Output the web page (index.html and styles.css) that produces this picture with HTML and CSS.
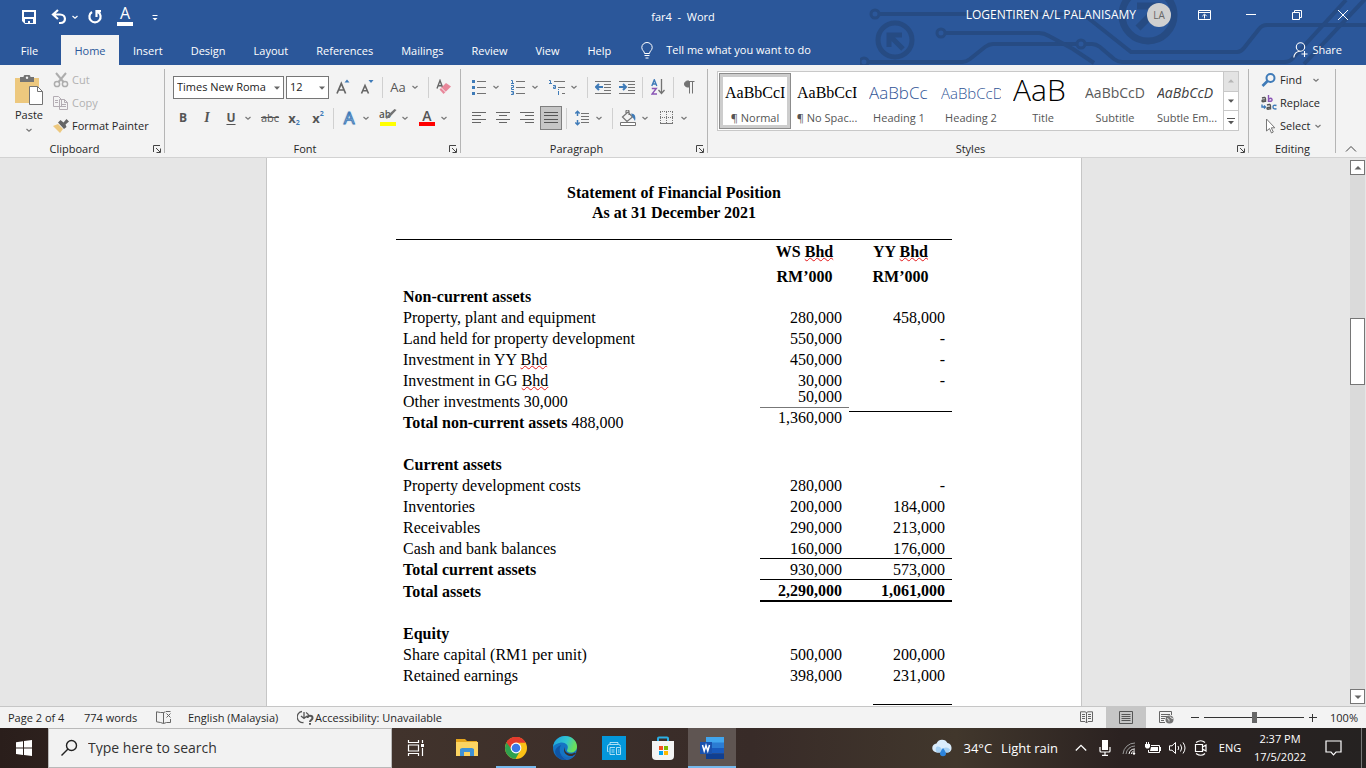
FILE: index.html
```html
<!DOCTYPE html>
<html lang="en">
<head>
<meta charset="utf-8">
<title>far4 - Word</title>
<link rel="stylesheet" href="styles.css">
</head>
<body>
<svg class="defs" aria-hidden="true">
  <symbol id="caret" viewBox="0 0 10 10"><path d="M2.500 4 5 6.300 7.500 4" fill="none" stroke="currentColor" stroke-width="1.200"/></symbol>
  <symbol id="launch" viewBox="0 0 8 8"><path d="M.5 7V.5H7M3 3l4 4M7.500 3.500v4h-4" fill="none" stroke="#444"/></symbol>
  <symbol id="tri" viewBox="0 0 8 8"><path d="M1 2.500h6L4 5.800z" fill="currentColor"/></symbol>
</svg>

<header class="top">
  <svg class="circuit" viewBox="860 0 506 65" fill="none" stroke="#264b83" stroke-width="4" aria-hidden="true">
    <circle cx="875" cy="14" r="4" stroke-width="3"/><path d="M879 14h180l24 0 24 19 24 19h106q4 0 7-4l15-19q3-4 8-4h99"/>
    <circle cx="895" cy="40" r="17" stroke-width="5"/><path d="M889 47V35h13M890 36l13 13" stroke-width="5"/>
    <circle cx="864" cy="62" r="4" stroke-width="3"/><path d="M868 62h94q4 0 8-3l15-12q4-3 8-3h84"/>
    <circle cx="941" cy="33" r="4" stroke-width="3"/><path d="M945 33h94q5 0 10 3l24 13 21 14"/>
    <circle cx="1081" cy="44" r="4" stroke-width="3"/><path d="M1085 44h7q4 0 8 3l14 12q4 3 8 3h162q6 0 9-4l53-58M1304 64l62-66"/>
    <circle cx="1148" cy="15" r="26" stroke-width="7"/><path d="M1138 28l18-18M1137 6h20v20" stroke-width="7"/>
  </svg>
  <div class="titlebar">
    <div class="quick">
      <button aria-label="Save"><svg width="16" height="16" viewBox="0 0 16 16"><path d="M1 1h14v14H4l-3-3z" fill="#fff"/><path d="M3 3h10v5H3zM4 10h8v4H9v-2H7v2H4z" fill="#2b579a"/></svg></button>
      <button aria-label="Undo"><svg width="16" height="16" viewBox="0 0 16 16" fill="none" stroke="#fff" stroke-width="2.200"><path d="M7 1 2 5.500 7 10M2 5.500h7c6.500 0 6.500 8.500.5 8.500H8"/></svg></button>
      <button class="slim" aria-label="Undo history"><svg width="10" height="10"><use href="#caret"/></svg></button>
      <button aria-label="Redo"><svg width="16" height="16" viewBox="0 0 16 16" fill="none" stroke="#fff" stroke-width="2.200"><path d="M5 3a5.600 5.600 0 1 0 6 0M14 2.200H9.500V8"/></svg></button>
      <button class="fontqat" aria-label="Font colour"><span>A</span></button>
      <button aria-label="Customise toolbar"><svg width="8" height="10" viewBox="0 0 8 10"><path d="M1.500 3.500h5" stroke="#fff"/><path d="M1.500 6h5L4 8.500z" fill="#fff"/></svg></button>
    </div>
    <div class="title">far4&nbsp; -&nbsp; Word</div>
    <div class="account">
      <span class="user">LOGENTIREN A/L PALANISAMY</span>
      <span class="avatar">LA</span>
      <div class="win">
        <button aria-label="Ribbon display options"><svg width="14" height="12" viewBox="0 0 14 12" fill="none" stroke="#fff"><path d="M.5 1.500h12v9H.5zM.5 3.500h12M6.500 9.500v-4M4.300 7.200 6.500 5l2.200 2.200"/></svg></button>
        <button aria-label="Minimise"><svg width="10" height="10"><path d="M0 4.500h10" stroke="#fff"/></svg></button>
        <button aria-label="Restore"><svg width="10" height="10" viewBox="0 0 10 10" fill="none" stroke="#fff"><path d="M.5 2.500h7v7h-7zM2.500 2.500V.5h7v7h-2"/></svg></button>
        <button aria-label="Close"><svg width="10" height="10" viewBox="0 0 10 10" fill="none" stroke="#fff"><path d="M0 0l10 10M10 0 0 10"/></svg></button>
      </div>
    </div>
  </div>
  <nav class="tabs">
    <button class="file">File</button>
    <button class="active">Home</button>
    <button>Insert</button>
    <button>Design</button>
    <button>Layout</button>
    <button>References</button>
    <button>Mailings</button>
    <button>Review</button>
    <button>View</button>
    <button>Help</button>
    <button class="tell"><svg width="12" height="17" viewBox="0 0 12 17" fill="none" stroke="#fff"><path d="M3.500 11.500C3.500 9 .8 8.500.8 5.500a5.200 5 0 0 1 10.400 0c0 3-2.700 3.500-2.700 6zM3.500 13.500h5M4.500 16h3"/></svg>Tell me what you want to do</button>
    <button class="share"><svg width="15" height="16" viewBox="0 0 15 16" fill="none" stroke="#fff" stroke-width="1.100"><circle cx="7.500" cy="5" r="4.200"/><path d="M.8 15.500c.4-4 3-6 6-6.300M11.500 9v6M8.500 12h6"/></svg>Share</button>
  </nav>
</header>

<section class="ribbon">
  <div class="group clip">
    <div class="body">
      <button class="paste">
        <svg width="28" height="30" viewBox="0 0 28 30"><path d="M0 3h24v25H0z" fill="#edc87e"/><path d="M5 2h3.500a3.500 2.500 0 0 1 7 0H19v5H5z" fill="#737373"/><circle cx="12" cy="2.800" r="1.200" fill="#f3f3f3"/><path d="M14.500 11.500h8l5 5v13h-13z" fill="#fff" stroke="#737373"/><path d="M22.500 11.500v5h5" fill="none" stroke="#737373"/></svg>
        <span>Paste</span><svg width="10" height="10"><use href="#caret"/></svg>
      </button>
      <div class="list">
        <button disabled><svg width="16" height="16" viewBox="0 0 16 16" fill="none" stroke="#adadad" stroke-width="1.500"><circle cx="4" cy="12" r="2.600"/><circle cx="12" cy="12" r="2.600"/><path d="M3 1l7.500 9M13 1 5.500 10" stroke-width="2"/></svg>Cut</button>
        <button disabled><svg width="16" height="16" viewBox="0 0 16 16" fill="#f3f3f3" stroke="#b3acb3"><path d="M.5 1.500h5l3 3v7h-8zM6.500 4.500h5l3 3v7h-8zM11.500 4.500v3h3M8 9.500h5M8 11.500h5M2 5.500h3M2 7.500h3"/></svg>Copy</button>
        <button><svg width="16" height="16" viewBox="0 0 16 16"><path d="M0 8l5-2 5 5-3 4z" fill="#edc87e"/><path d="M5 4.500 7.500 2l3 2.500L13.500 1 16 3.500 12.500 6.500 13.500 9 11 11z" fill="#666"/></svg>Format Painter</button>
      </div>
    </div>
    <div class="foot"><span>Clipboard</span><svg width="8" height="8"><use href="#launch"/></svg></div>
  </div>

  <div class="group font">
    <div class="rows">
      <div class="row">
        <label class="combo name"><select aria-label="Font"><option>Times New Roma</option></select><svg width="8" height="8"><use href="#tri"/></svg></label>
        <label class="combo size"><select aria-label="Font size"><option>12</option></select><svg width="8" height="8"><use href="#tri"/></svg></label>
        <button class="tool" aria-label="Grow font"><svg width="14" height="16" viewBox="0 0 14 16"><path d="M1 14.500 5.300 4.500 9.600 14.500M2.800 11h5" fill="none" stroke="#666" stroke-width="1.700"/><path d="M8.500 3.500h5l-2.500-3z" fill="#3f7bb8"/></svg></button>
        <button class="tool" aria-label="Shrink font"><svg width="14" height="16" viewBox="0 0 14 16"><path d="M1.500 14.500 5 6.500 8.500 14.500M3 11.700h4" fill="none" stroke="#666" stroke-width="1.600"/><path d="M8.500 1h5L11 4z" fill="#3f7bb8"/></svg></button>
        <i class="sep"></i>
        <button class="tool case">Aa</button><button class="drop" aria-label="Case options"><svg width="10" height="10"><use href="#caret"/></svg></button>
        <i class="sep"></i>
        <button class="tool" aria-label="Clear formatting"><svg width="16" height="16" viewBox="0 0 16 16"><path d="M1 9.500 4 1.500l3 8M2 6.800h4" fill="none" stroke="#666" stroke-width="1.400"/><path d="M3.500 10.500 10 4l5 3.500L7.500 15z" fill="#e8879a"/><path d="M5.500 9l4 4" stroke="#f3f3f3"/></svg></button>
      </div>
      <div class="row">
        <button class="tool bold">B</button>
        <button class="tool ital">I</button>
        <button class="tool under">U</button><button class="drop" aria-label="Underline options"><svg width="10" height="10"><use href="#caret"/></svg></button>
        <button class="tool strike">abc</button>
        <button class="tool script">x<sub>2</sub></button>
        <button class="tool script">x<sup>2</sup></button>
        <i class="sep"></i>
        <button class="tool effect">A</button><button class="drop" aria-label="Effect options"><svg width="10" height="10"><use href="#caret"/></svg></button>
        <button class="tool high"><span>ab</span><svg width="12" height="11" viewBox="0 0 12 11"><path d="M11.500 1 4.500 8.500 1 10l1.500-3.500L9.500 0z" fill="#737373"/></svg></button><button class="drop" aria-label="Highlight options"><svg width="10" height="10"><use href="#caret"/></svg></button>
        <button class="tool color"><span>A</span></button><button class="drop" aria-label="Colour options"><svg width="10" height="10"><use href="#caret"/></svg></button>
      </div>
    </div>
    <div class="foot"><span>Font</span><svg width="8" height="8"><use href="#launch"/></svg></div>
  </div>

  <div class="group para">
    <div class="rows">
      <div class="row">
        <button class="tool" aria-label="Bullets"><svg width="14" height="16" viewBox="0 0 14 16"><path d="M5 2.500h9M5 8.500h9M5 14.500h9" stroke="#737373"/><path d="M0 1h3v3H0zM0 7h3v3H0zM0 13h3v3H0z" fill="#3f7bb8"/></svg></button><button class="drop" aria-label="Bullet options"><svg width="10" height="10"><use href="#caret"/></svg></button>
        <button class="tool" aria-label="Numbering"><svg width="14" height="16" viewBox="0 0 14 16"><path d="M5 2.500h9M5 8.500h9M5 14.500h9" stroke="#737373"/><path d="M0 1.500h1.500V4M0 4.500h3M0 6.500h2.500v2H.5v2H3M0 12.500h2.500v3H0M.8 14h1.700" fill="none" stroke="#3f7bb8"/></svg></button><button class="drop" aria-label="Numbering options"><svg width="10" height="10"><use href="#caret"/></svg></button>
        <button class="tool" aria-label="Multilevel list"><svg width="16" height="16" viewBox="0 0 16 16"><path d="M5 2.500h11M9 8.500h7M13 14.500h3" stroke="#737373"/><path d="M0 1.500h1.500V4M0 4.500h3M4 6.500h2.500v3H4.500v-1.500h2M9.500 10v1M9.500 12v4" fill="none" stroke="#3f7bb8"/></svg></button><button class="drop" aria-label="Multilevel options"><svg width="10" height="10"><use href="#caret"/></svg></button>
        <i class="sep"></i>
        <button class="tool" aria-label="Decrease indent"><svg width="16" height="14" viewBox="0 0 16 14"><path d="M0 1.500h16M9 4.500h7M9 7.500h7M9 10.500h7M0 13.500h16" stroke="#737373"/><path d="M8 7H2M4 4 1 7l3 3" fill="none" stroke="#3f7bb8" stroke-width="2"/></svg></button>
        <button class="tool" aria-label="Increase indent"><svg width="16" height="14" viewBox="0 0 16 14"><path d="M0 1.500h16M9 4.500h7M9 7.500h7M9 10.500h7M0 13.500h16" stroke="#737373"/><path d="M0 7h6M4 4l3 3-3 3" fill="none" stroke="#3f7bb8" stroke-width="2"/></svg></button>
        <i class="sep"></i>
        <button class="tool" aria-label="Sort"><svg width="14" height="16" viewBox="0 0 14 16" fill="none"><path d="M.8 7 3.300.8 5.800 7M1.500 5h3.600" stroke="#3f7bb8" stroke-width="1.400"/><path d="M.8 9.500h4.500L1 15h5" stroke="#8a55b5" stroke-width="1.400"/><path d="M10.500 0v14M7.500 11l3 3.500 3-3.500" stroke="#737373" stroke-width="1.300"/></svg></button>
        <i class="sep"></i>
        <button class="tool" aria-label="Show marks"><svg width="12" height="14" viewBox="0 0 12 14"><path d="M6 1C0 0 0 8 6 7zM5.500 1.500h6" fill="#737373" stroke="#737373"/><path d="M6.500 1v12.500M9.500 1v12.500" stroke="#737373"/></svg></button>
      </div>
      <div class="row">
        <button class="tool" aria-label="Align left"><svg width="14" height="12" viewBox="0 0 14 12"><path d="M0 .5h14M0 3.500h9M0 7.500h14M0 10.500h9" stroke="#666"/></svg></button>
        <button class="tool" aria-label="Centre"><svg width="14" height="12" viewBox="0 0 14 12"><path d="M0 .5h14M3 3.500h8M0 7.500h14M3 10.500h8" stroke="#666"/></svg></button>
        <button class="tool" aria-label="Align right"><svg width="14" height="12" viewBox="0 0 14 12"><path d="M0 .5h14M5 3.500h9M0 7.500h14M5 10.500h9" stroke="#666"/></svg></button>
        <button class="tool on" aria-label="Justify"><svg width="14" height="12" viewBox="0 0 14 12"><path d="M0 .5h14M0 3.500h14M0 7.500h14M0 10.500h14" stroke="#555"/></svg></button>
        <i class="sep"></i>
        <button class="tool" aria-label="Line spacing"><svg width="14" height="16" viewBox="0 0 14 16"><path d="M6 3.500h8M6 6.500h8M6 9.500h8M6 12.500h8" stroke="#737373"/><path d="M2.500 1.500v4.500M.3 3.500 2.500 1.300 4.700 3.500M2.500 10v4.500M.3 12.500l2.200 2.200 2.200-2.200" fill="none" stroke="#3f7bb8" stroke-width="1.500"/></svg></button><button class="drop" aria-label="Spacing options"><svg width="10" height="10"><use href="#caret"/></svg></button>
        <i class="sep"></i>
        <button class="tool" aria-label="Shading"><svg width="16" height="16" viewBox="0 0 16 16" fill="none" stroke="#737373"><path d="M2.500 7 8 2l4.500 5L7 11.500zM6 5V1.500a1.500 1.500 0 0 1 3 0V5" stroke-width="1.200"/><path d="M11 3.500c4 0 5 3 4 7.500l-2.500-4z" fill="#3f7bb8" stroke="none"/><path d="M.5 12.500h15v3H.5z" fill="#fff"/></svg></button><button class="drop" aria-label="Shading options"><svg width="10" height="10"><use href="#caret"/></svg></button>
        <button class="tool" aria-label="Borders"><svg width="14" height="14" viewBox="0 0 14 14" stroke="#777"><path d="M0 .5h13M0 6.500h13M.5 1v12M6.500 1v12M12.500 1v12" stroke-dasharray="1 1"/><path d="M0 12.500h13"/></svg></button><button class="drop" aria-label="Border options"><svg width="10" height="10"><use href="#caret"/></svg></button>
      </div>
    </div>
    <div class="foot"><span>Paragraph</span><svg width="8" height="8"><use href="#launch"/></svg></div>
  </div>

  <div class="group styles">
    <div class="gallery">
      <button class="style chosen"><span class="pv">AaBbCcI</span><span class="nm">¶ Normal</span></button>
      <button class="style"><span class="pv">AaBbCcI</span><span class="nm">¶ No Spac...</span></button>
      <button class="style h1"><span class="pv">AaBbCc</span><span class="nm">Heading 1</span></button>
      <button class="style h2"><span class="pv">AaBbCcD</span><span class="nm">Heading 2</span></button>
      <button class="style big"><span class="pv">AaB</span><span class="nm">Title</span></button>
      <button class="style subt"><span class="pv">AaBbCcD</span><span class="nm">Subtitle</span></button>
      <button class="style emph"><span class="pv">AaBbCcD</span><span class="nm">Subtle Em...</span></button>
      <div class="more">
        <button class="off" aria-label="Previous row"><svg width="8" height="8" viewBox="0 0 8 8"><path d="M1 5.500h6L4 2.200z" fill="#b5b5b5"/></svg></button>
        <button aria-label="Next row"><svg width="8" height="8"><use href="#tri"/></svg></button>
        <button aria-label="All styles"><svg width="8" height="8" viewBox="0 0 8 8"><path d="M0 1.500h8" stroke="#555"/><path d="M1 4h6L4 7.300z" fill="#555"/></svg></button>
      </div>
    </div>
    <div class="foot"><span>Styles</span><svg width="8" height="8"><use href="#launch"/></svg></div>
  </div>

  <div class="group edit">
    <div class="list">
      <button><svg width="16" height="16" viewBox="0 0 16 16" fill="none" stroke="#3f7bb8"><circle cx="9.500" cy="6" r="4" stroke-width="2"/><path d="M6.500 9 1.500 14" stroke-width="2.600"/></svg>Find<svg class="gap" width="10" height="10"><use href="#caret"/></svg></button>
      <button><svg width="16" height="16" viewBox="0 0 16 16" fill="none" stroke="#555" stroke-width="1.400"><path d="M1 3q3.500-1.500 3.500 1v3M4.500 5Q1 4.500 1 6t3.500 0"/><path d="M7.500 0v7M7.500 4.500q3-2.500 3.500 0t-3.500 1.500" stroke="#8a55b5"/><path d="M6 10q3.500-1.500 3.500 1v3.500M9.500 12.500Q6 12 6 13.500t3.500 0"/><path d="M15.500 10.500q-3.500-1-3.500 1.500t3.500 1.800M1 9.500v2.500h3M3 10.500l1.500 1.500L3 13.500" stroke="#3f7bb8"/></svg>Replace</button>
      <button><svg width="16" height="16" viewBox="0 0 16 16"><path d="M5.500 1v12l3-2.500 2 4.500 1.800-1-2-4.200h3.500z" fill="#fff" stroke="#777"/></svg>Select<svg width="10" height="10"><use href="#caret"/></svg></button>
    </div>
    <div class="foot"><span>Editing</span></div>
  </div>
  <button class="collapse" aria-label="Collapse ribbon"><svg width="12" height="8" viewBox="0 0 12 8"><path d="M1 6.500 6 1.500l5 5" fill="none" stroke="#444"/></svg></button>
</section>

<main class="work">
  <div class="canvas">
    <article class="page">
      <h1>Statement of Financial Position<br>As at 31 December 2021</h1>
      <table>
        <colgroup><col><col class="c-ws"><col class="c-yy"></colgroup>
        <thead>
          <tr><td></td><th>WS <span class="sp">Bhd</span></th><th>YY <span class="sp">Bhd</span></th></tr>
          <tr><td></td><th>RM’000</th><th>RM’000</th></tr>
        </thead>
        <tbody>
          <tr><th>Non-current assets</th><td></td><td></td></tr>
          <tr><td>Property, plant and equipment</td><td>280,000</td><td>458,000</td></tr>
          <tr><td>Land held for property development</td><td>550,000</td><td>-</td></tr>
          <tr><td>Investment in YY <span class="sp">Bhd</span></td><td>450,000</td><td>-</td></tr>
          <tr><td>Investment in GG <span class="sp">Bhd</span></td><td>30,000</td><td>-</td></tr>
          <tr><td>Other investments 30,000</td><td class="pasted" rowspan="2"><span>50,000</span><span>1,360,000</span></td><td class="line"></td></tr>
          <tr><td><b>Total non-current assets</b> 488,000</td><td></td></tr>
          <tr><td></td><td></td><td></td></tr>
          <tr><th>Current assets</th><td></td><td></td></tr>
          <tr><td>Property development costs</td><td>280,000</td><td>-</td></tr>
          <tr><td>Inventories</td><td>200,000</td><td>184,000</td></tr>
          <tr><td>Receivables</td><td>290,000</td><td>213,000</td></tr>
          <tr class="ruled"><td>Cash and bank balances</td><td>160,000</td><td>176,000</td></tr>
          <tr class="ruled"><th>Total current assets</th><td>930,000</td><td>573,000</td></tr>
          <tr class="total"><th>Total assets</th><td>2,290,000</td><td>1,061,000</td></tr>
          <tr><td></td><td></td><td></td></tr>
          <tr><th>Equity</th><td></td><td></td></tr>
          <tr><td>Share capital (RM1 per unit)</td><td>500,000</td><td>200,000</td></tr>
          <tr><td>Retained earnings</td><td>398,000</td><td>231,000</td></tr>
        </tbody>
      </table>
      <hr class="next">
    </article>
  </div>
  <div class="scroll">
    <button aria-label="Scroll up"><svg width="8" height="8" viewBox="0 0 8 8"><path d="M.5 5.500h7L4 2z" fill="#666"/></svg></button>
    <div class="above"></div><div class="thumb"></div><div class="below"></div>
    <button aria-label="Scroll down"><svg width="8" height="8" viewBox="0 0 8 8"><path d="M.5 2.500h7L4 6z" fill="#666"/></svg></button>
  </div>
</main>

<footer class="status">
  <span class="pg">Page 2 of 4</span>
  <span class="wc">774 words</span>
  <svg width="15" height="13" viewBox="0 0 15 13" fill="none" stroke="#666"><path d="M7.500 12.500V1.500h-3L.5.8v10l4 .7 3 1zM7.500 1.500l2-.7M7.500 12.500l3-1h4V8M10 .5h4.500M10.500 2.500l4 4M14.500 2.500l-4 4"/></svg>
  <span class="lang">English (Malaysia)</span>
  <span class="acc"><svg width="17" height="15" viewBox="0 0 17 15" fill="none" stroke="#555"><path d="M5 1.500A5.500 5.500 0 0 0 6.500 12.500M9 2.500q2 1 3 3.500M7 2v6M4 6l3 2.500L10 6" stroke-width="1.300"/><path d="M10.500 8c0-3 5-3 5 0 0 2-2.500 2-2.500 4M13 13v1.800" stroke-width="2"/></svg>Accessibility: Unavailable</span>
  <div class="views">
    <button aria-label="Read mode"><svg width="13" height="13" viewBox="0 0 13 13" fill="none" stroke="#666"><path d="M6.500 12V1.500L5 .8H.5v9.700H5l1.500 1.500L8 10.500h4.500V.8H8L6.500 1.500M2 3.500h3M2 5.500h3M2 7.500h3M8 3.500h3M8 5.500h3M8 7.500h3"/></svg></button>
    <button class="cur" aria-label="Print layout"><svg width="14" height="13" viewBox="0 0 14 13" fill="none" stroke="#555"><path d="M.5.5h13v12H.5zM2.500 3.500h9M2.500 5.500h9M2.500 7.500h9M2.500 9.500h9"/></svg></button>
    <button aria-label="Web layout"><svg width="15" height="13" viewBox="0 0 15 13" fill="none" stroke="#666"><path d="M12.500 4V.5H.5v11H6M2 3.500h9M2 5.500h6M2 7.500h4M2 9.500h3"/><circle cx="10.500" cy="8.500" r="4" fill="#737373" stroke="none"/><path d="M8 7.500l2 1v2M11 5.500l1 1.500 2 .5" stroke="#ddd"/></svg></button>
  </div>
  <div class="zoom">
    <button aria-label="Zoom out"><svg width="8" height="8"><path d="M0 3.500h8" stroke="#333"/></svg></button>
    <input type="range" min="0" max="100" value="50" aria-label="Zoom">
    <button aria-label="Zoom in"><svg width="8" height="8"><path d="M0 3.500h8M3.500 0v8" stroke="#333"/></svg></button>
    <span>100%</span>
  </div>
</footer>

<footer class="taskbar">
  <button class="start" aria-label="Start"><svg width="16" height="16" viewBox="0 0 16 16"><path d="M0 2.300 7 1.200V7.600H0zM8 1 16 0v7.600H8zM0 8.500h7v6.400L0 14zM8 8.500h8V16L8 15z" fill="#fff"/></svg></button>
  <label class="search"><svg width="18" height="18" viewBox="0 0 18 18" fill="none" stroke="#222" stroke-width="1.400"><circle cx="11.500" cy="6.500" r="5"/><path d="M8 10 1.500 16.500"/></svg><input type="text" placeholder="Type here to search" aria-label="Search"></label>
  <div class="apps">
    <button aria-label="Task view"><svg width="18" height="16" viewBox="0 0 18 16" fill="none" stroke="#fff" stroke-width="1.200"><path d="M1.500 0v2.500h10V0M1.500 5h10v6h-10zM1.500 16v-2.500h10V16M15.500 0v3M15.500 8v8"/><path d="M14 4h3v3h-3z" fill="#fff" stroke="none"/></svg></button>
    <button aria-label="File Explorer"><svg width="22" height="20" viewBox="0 0 22 20"><path d="M0 1h9l2 2h10v15H0z" fill="#e5a51d"/><path d="M0 4h22v14H0z" fill="#fcd462"/><path d="M4 18v-7l2-1h10l2 1v7h-4v-4H8v4z" fill="#3f92d6"/></svg></button>
    <button class="run" aria-label="Chrome"><svg width="22" height="22" viewBox="0 0 22 22"><circle cx="11" cy="11" r="11" fill="#fbc116"/><path d="M11 11 1.500 5.500A11 11 0 0 1 20.500 5.500z" fill="#e33b2e"/><path d="M11 11 1.500 5.500A11 11 0 0 0 10.500 22L15.500 13z" fill="#2fa14f"/><path d="M11 5.500h9.500L15.800 13.700z" fill="#fbc116"/><path d="M1.500 5.500 6.200 13.700 11 11V5.500z" fill="#2fa14f"/><path d="M1.500 5.500A11 11 0 0 1 20.500 5.500H11L6 11.500z" fill="#e33b2e"/><circle cx="11" cy="11" r="5.400" fill="#fff"/><circle cx="11" cy="11" r="4.300" fill="#3b78e7"/></svg></button>
    <button aria-label="Edge"><svg width="24" height="24" viewBox="0 0 24 24"><defs><linearGradient id="eg" x1="0" x2="1" y1="0" y2=".3"><stop offset="0" stop-color="#1b9fe0"/><stop offset=".6" stop-color="#32c6cf"/><stop offset="1" stop-color="#6be05a"/></linearGradient></defs><circle cx="12" cy="12" r="12" fill="#1474c4"/><path d="M0 11C1 4 6 0 12 0c7 0 12 5 12 10.500 0 4-3 6-6 6-4 0-4.500-1.800-3.700-3C16.500 9 12 6 8 6.500 4 7 1 9 0 11z" fill="url(#eg)"/><path d="M12 11c-2 3-1 8 5 9 3 .3 4.500-.7 6-2l-1-1.500c-3 2-7 1.500-9-.5-1.500-1.500-1.500-3.500-1-5z" fill="#3a2d28"/><path d="M8 9c-3 5-1 12 6 14.800-3 .3-7 0-10-3.300C1 17 1 12 8 9z" fill="#0f55a5"/><path d="M23 17.500c-2 4-5 6-9 6.400-3-1-5-3-6-6 3 4 10 4.500 15-.4z" fill="#1b68b8"/></svg></button>
    <button aria-label="Printer assistant"><svg width="24" height="24" viewBox="0 0 24 24" fill="none" stroke="#d8f1fb"><path d="M0 0h24v24H0z" fill="#0497da" stroke="none"/><path d="M8 8.500V6.500h8v2M6.500 15.500h-1v-5q0-2 2-2h9q2 0 2 2M8 11.500h5M8 11.500v7h5M14.500 11.500h4v7h-4zM9.500 14h3M9.500 16h3M16 14h1.500M16 16h1.500" stroke-width=".8"/></svg></button>
    <button aria-label="Store"><svg width="24" height="24" viewBox="0 0 24 24"><path d="M7 6V2.500q0-1 1-1h8q1 0 1 1V6" fill="none" stroke="#2bafe4" stroke-width="2"/><path d="M1 5h22v15q0 4-4 4H5q-4 0-4-4z" fill="#f4f4f4"/><path d="M8 10h4v4H8z" fill="#f25022"/><path d="M13 10h4v4h-4z" fill="#7fba00"/><path d="M8 15h4v4H8z" fill="#00a4ef"/><path d="M13 15h4v4h-4z" fill="#ffb900"/></svg></button>
    <button class="run front" aria-label="Word"><svg width="24" height="22" viewBox="0 0 24 22"><path d="M6 0h18v6H6z" fill="#41a5ee"/><path d="M6 5.500h18V11H6z" fill="#2b7cd3"/><path d="M6 11h18v5.500H6z" fill="#185abd"/><path d="M6 16.500h18V22H6z" fill="#103f91"/><path d="M0 5h12v12H0z" fill="#1a52ae"/><path d="M2.500 8l1.700 6L6 8.500 7.800 14 9.500 8" fill="none" stroke="#fff" stroke-width="1.500"/></svg></button>
  </div>
  <div class="tray">
    <button class="weather"><svg width="22" height="18" viewBox="0 0 22 18"><path d="M5 13.500a4.500 4.500 0 0 1-.5-9A6 6 0 0 1 15.500 4a5 5 0 0 1 1 9.500z" fill="#d9ecfb"/><path d="M5 13.500a4 4 0 0 1 0-6 5 5 0 0 1 5 3 5 5 0 0 1 8 0 4 4 0 0 1-2 3z" fill="#a5d0f3"/><path d="M11 9q-3 4-3 5.500a3 2.800 0 0 0 6 0Q14 13 11 9z" fill="#2c84dc"/></svg><span>34°C</span><span>Light rain</span></button>
    <button aria-label="Hidden icons"><svg width="12" height="8" viewBox="0 0 12 8"><path d="M.8 6.500 6 1.300l5.200 5.200" fill="none" stroke="#fff" stroke-width="1.300"/></svg></button>
    <button aria-label="Microphone"><svg width="12" height="16" viewBox="0 0 12 16"><path d="M3 0h6v10H3z" fill="#fff"/><path d="M1 7v4q0 1 1 1h8q1 0 1-1V7M6 12v3M3 15.300h6" fill="none" stroke="#fff" stroke-width="1.200"/></svg></button>
    <button aria-label="Network"><svg width="14" height="14" viewBox="0 0 14 14" fill="none"><path d="M1 13A12 12 0 0 1 13 2M4 13a9 9 0 0 1 9-8" stroke="#999"/><path d="M7 13a6 6 0 0 1 6-5M9.500 13a3 3 0 0 1 3.500-3" stroke="#fff"/><circle cx="12" cy="12.500" r="1.200" fill="#fff"/></svg></button>
    <button aria-label="Battery"><svg width="16" height="12" viewBox="0 0 16 12"><path d="M6 3.500h8.500v7H3.500V8" fill="none" stroke="#fff"/><path d="M6 5h7v4H5zM15 5h1v4h-1zM0 2h5v3L3.500 6.500h-2L0 5zM1 0h1v2H1zM3 0h1v2H3z" fill="#fff"/></svg></button>
    <button aria-label="Volume"><svg width="17" height="14" viewBox="0 0 17 14" fill="none" stroke="#fff"><path d="M.5 4.800h2.500L6.500 1.500v11L3 9.200H.5zM9 5q1.500 2 0 4M11.500 3.500q2.500 3.500 0 7M14 1.500q4 5.500 0 11"/></svg></button>
    <button aria-label="Meet now"><svg width="14" height="16" viewBox="0 0 14 16" fill="none" stroke="#fff"><path d="M1.500 4.500h7v7h-7zM8.500 7l3.500-2v6L8.500 9M2 2.500q5-3.500 9 0M2 13.500q5 3.500 9 0" stroke-width="1.200"/></svg></button>
    <button class="kb">ENG</button>
    <button class="clock"><span>2:37 PM</span><span>17/5/2022</span></button>
    <button class="note" aria-label="Notifications"><svg width="17" height="16" viewBox="0 0 17 16" fill="none" stroke="#fff" stroke-width="1.200"><path d="M1 1h15v11h-5l-2.500 2.800L6 12H1z"/></svg></button>
  </div>
</footer>
</body>
</html>
```
FILE: styles.css
```css
* { box-sizing: border-box; }
body {
  margin: 0;
  height: 100vh;
  display: flex;
  flex-direction: column;
  overflow: hidden;
  font: 11px/16px "Open Sans", "Noto Sans", sans-serif;
  color: #262626;
}
button {
  display: flex;
  align-items: center;
  justify-content: center;
  margin: 0;
  padding: 0;
  border: 0;
  background: none;
  font: inherit;
  color: inherit;
  white-space: nowrap;
}
svg { flex: none; }
.defs { position: absolute; width: 0; height: 0; }

/* Title bar and tabs */
.top { position: relative; flex: none; background: #2b579a; color: #fff; }
.circuit { position: absolute; top: 0; right: 0; width: 506px; height: 65px; }
.titlebar {
  position: relative;
  display: grid;
  grid-template-columns: 1fr auto 1fr;
  align-items: center;
  height: 33px;
}
.quick { display: flex; align-items: center; padding-left: 14px; }
.quick button { width: 30px; height: 30px; }
.quick .slim { width: 10px; margin-left: -4px; }
.quick .fontqat { align-items: flex-start; padding-top: 2px; }
.fontqat span { width: 16px; border-bottom: 4px solid #fff; font-size: 16px; line-height: 18px; }
.account { display: flex; align-items: center; justify-content: flex-end; height: 30px; align-self: start; }
.user { font-size: 12px; white-space: nowrap; }
.avatar {
  width: 24px;
  height: 24px;
  margin: 0 11px;
  border-radius: 50%;
  background: #d0d0d0;
  color: #666;
  font-size: 10px;
  line-height: 24px;
  text-align: center;
}
.win { display: flex; }
.win button { width: 46px; height: 30px; }
.tabs { position: relative; display: flex; height: 32px; align-items: stretch; padding-top: 2px; }
.tabs button { padding: 1px 14px 0; }
.tabs .file { width: 61px; padding-right: 16px; }
.tabs .active { width: 58px; padding: 1px 0 0; background: #f3f3f3; color: #2b579a; }
.tabs .tell { gap: 13px; padding-left: 16px; }
.tabs .tell, .tabs .share { padding-top: 0; }
.tabs .share { gap: 4px; margin-left: auto; padding-right: 24px; }

/* Ribbon */
.ribbon {
  flex: none;
  display: flex;
  height: 93px;
  background: #f3f3f3;
  border-bottom: 1px solid #d2d2d2;
}
.group {
  display: flex;
  flex-direction: column;
  justify-content: space-between;
  position: relative;
}
.group::after {
  content: "";
  position: absolute;
  right: 0;
  top: 4px;
  bottom: 4px;
  width: 1px;
  background: #b5b5b5;
}
.clip { width: 165px; }
.font { width: 296px; }
.para { width: 247px; }
.styles { flex: 1; min-width: 0; }
.edit { width: 87px; }
.foot { display: grid; grid-template-columns: 1fr 8px; gap: 4px; align-items: center; height: 16px; padding-right: 4px; text-align: center; }
.edit .foot { display: block; padding: 0; }
.body { display: flex; }
.paste { flex-direction: column; width: 42px; margin-left: 8px; padding-top: 8px; }
.paste span { line-height: 20px; }
.paste svg:last-child { color: #777; }
.list { display: flex; flex-direction: column; align-items: flex-start; padding: 3px 0 0 3px; }
.list button { height: 23px; gap: 3px; }
.list button:disabled { color: #b1b1b1; }
.edit .list { padding-left: 12px; }
.list .gap { margin-left: 6px; }
.list button > svg:last-child { color: #777; }
.rows { display: flex; flex-direction: column; gap: 7px; padding: 10px 0 0 6px; }
.row { display: flex; align-items: center; height: 24px; color: #555; }
.tool { flex: none; width: 24px; height: 24px; }
.drop { flex: none; width: 15px; height: 24px; justify-content: flex-start; color: #777; }
.sep { flex: none; width: 7px; height: 21px; border-left: 3px solid #f3f3f3; border-right: 3px solid #f3f3f3; background: #d0d0d0; }
.combo { position: relative; display: flex; height: 23px; margin-right: 2px; color: #666; }
.combo select {
  appearance: none;
  width: 100%;
  padding: 0 3px;
  border: 1px solid #767676;
  border-radius: 0;
  background: #fff;
  color: #222;
  font: inherit;
}
.combo svg { position: absolute; right: 3px; top: 8px; pointer-events: none; }
.combo.name { width: 111px; margin-left: 2px; }
.combo.size { width: 43px; }
.case { font-size: 13px; }
.bold { font-weight: 700; font-size: 12px; }
.ital { font: italic 700 14px "Liberation Serif", serif; }
.under { font-weight: 700; font-size: 12px; text-decoration: underline; text-underline-offset: 2px; }
.strike { font-size: 11px; text-decoration: line-through; }
.script { font-weight: 700; font-size: 13px; }
.script sub, .script sup { font-size: 7px; line-height: 7px; color: #3f7bb8; }
.script sub { align-self: flex-end; padding-bottom: 4px; }
.script sup { align-self: flex-start; padding-top: 4px; }
.effect { font-size: 17px; color: #f3f3f3; -webkit-text-stroke: 1px #3f7bb8; text-shadow: 0 0 2px #7fb0df; }
.high, .color { align-items: flex-start; position: relative; padding-top: 3px; }
.high::after, .color::after { content: ""; position: absolute; left: 4px; bottom: 4px; width: 16px; height: 4px; background: #ff0; }
.color::after { background: #f00; }
.high span { font-size: 10px; font-weight: 600; line-height: 10px; }
.high svg { margin-left: -6px; }
.color span { font-size: 14px; font-weight: 600; line-height: 14px; }
.on { width: 22px; margin: 0 1px; border: 1px solid #7f7f7f; background: #c6c6c6; }

/* Styles gallery */
.gallery {
  display: flex;
  height: 60px;
  margin: 6px 10px 0 9px;
  padding-left: 1px;
  border: 1px solid #c8c8c8;
  background: #fff;
}
.style { flex: 1 1 72px; min-width: 0; flex-direction: column; justify-content: flex-end; padding: 0 6px 3px; }
.pv { width: 100%; height: 32px; overflow: hidden; font: 16px/32px "Liberation Serif", serif; color: #000; text-align: left; }
.nm { line-height: 18px; color: #555; }
.chosen { border: 1px solid #8c8c8c; box-shadow: inset 0 0 0 3px #cdcdcd; padding: 0 5px 1px; margin: 1px 0; }
.h1 .pv, .h2 .pv, .big .pv, .subt .pv, .emph .pv { font-family: "Open Sans", sans-serif; font-weight: 300; }
.h1 .pv { font-size: 17px; color: #2f5496; }
.h2 .pv { font-size: 15px; color: #2f5496; }
.big .pv { font-size: 30px; line-height: 26px; }
.subt .pv { font-size: 14px; font-weight: 400; color: #5a5a5a; }
.emph .pv { font-size: 14px; font-weight: 400; font-style: italic; color: #404040; }
.more { flex: none; display: flex; flex-direction: column; width: 15px; color: #555; }
.more button { flex: 1; border-left: 1px solid #c8c8c8; }
.more button + button { border-top: 1px solid #c8c8c8; }
.more .off { background: #e3e3e3; }
.collapse { align-self: flex-end; width: 30px; height: 16px; }

/* Document */
.work { flex: 1; min-height: 0; display: flex; background: #e6e6e6; }
.canvas { flex: 1; overflow: hidden; display: flex; justify-content: center; }
.page {
  width: 816px;
  padding: 25px 129px 0 129px;
  border: solid #c6c6c6;
  border-width: 0 1px;
  background: #fff;
  font: 16px/20px "Liberation Serif", serif;
  color: #000;
}
.page h1 { margin: 0 0 16px; font-size: 16px; line-height: 20px; text-align: center; }
.page table { width: 100%; table-layout: fixed; border-collapse: separate; border-spacing: 0; border-top: 1px solid #000; }
.c-ws { width: 89px; }
.c-yy { width: 103px; }
.page tr { height: 21px; }
.page thead tr { height: 23px; }
.page td, .page th { padding: 0 7px; line-height: 19px; text-align: right; white-space: nowrap; }
.page td:first-child, .page th:first-child { text-align: left; }
.page thead th { text-align: center; }
.page thead tr + tr th { vertical-align: bottom; }
.sp { text-decoration: underline wavy #e3191b 1px; text-underline-offset: 0; text-decoration-skip-ink: none; }
.page td.pasted { padding: 0; vertical-align: top; }
.pasted span { display: block; padding: 0 7px; line-height: 20px; }
.pasted span:first-child { line-height: 12px; padding-bottom: 4px; border-bottom: 1px solid #777; }
.page td.line { border-bottom: 1px solid #000; }
.ruled td + td, .ruled th + td { border-bottom: 1px solid #000; }
.page tr.total { height: 22px; }
.total td { border-bottom: 2px solid #000; font-weight: 700; }
.next { width: 79px; margin: 18px 0 0 auto; border: 0; border-top: 1px solid #000; }
.scroll { flex: none; display: flex; flex-direction: column; width: 18px; padding: 2px 1px 2px 2px; }
.scroll button { flex: none; height: 15px; border: 1px solid #767676; background: #fff; }
.above { flex: 144; background: #dadada; }
.thumb { flex: 65; border: 1px solid #767676; background: #fff; }
.below { flex: 305; background: #dadada; }

/* Status bar */
.status {
  flex: none;
  display: flex;
  align-items: center;
  height: 22px;
  padding: 0 8px;
  background: #f3f3f3;
  border-top: 1px solid #c6c6c6;
  white-space: nowrap;
}
.status > * { flex: none; }
.pg { width: 76px; }
.wc { width: 72px; }
.lang { width: 126px; padding-left: 17px; }
.acc { display: flex; align-items: center; gap: 1px; }
.views { display: flex; align-self: stretch; margin-left: auto; }
.views button { width: 40px; }
.views .cur { background: #c6c6c6; }
.zoom { display: flex; align-items: center; gap: 5px; margin-left: 5px; }
.zoom span { width: 28px; margin-left: 8px; text-align: right; }
.zoom input { appearance: none; width: 100px; height: 12px; margin: 0; background: linear-gradient(#333, #333) center / 100% 1px no-repeat; }
.zoom input::-webkit-slider-thumb { appearance: none; width: 5px; height: 11px; background: #666; }

/* Taskbar */
.taskbar {
  flex: none;
  display: flex;
  height: 40px;
  background: linear-gradient(90deg, #2a1e1b 0, #41332c 29%, #382b28 55%, #41372c 70%, #2b2221 82%, #252221 100%);
  color: #fff;
}
.start { width: 48px; }
.search {
  display: flex;
  align-items: center;
  gap: 10px;
  width: 344px;
  padding-left: 11px;
  border: 1px solid #b9b9b9;
  background: #f2f2f2;
}
.search input { flex: 1; min-width: 0; padding: 0; border: 0; outline: 0; background: none; font: inherit; font-size: 14px; }
.search input::placeholder { color: #333; opacity: 1; }
.apps { display: flex; gap: 1px; }
.apps button { width: 48px; position: relative; }
.apps button:first-child { margin-right: 2px; }
.run::after { content: ""; position: absolute; left: 4px; right: 4px; bottom: 0; height: 2px; background: #76b9ed; }
.front { background: #5f5552; }
.apps .front::after { left: 0; right: 0; }
.tray { display: flex; margin-left: auto; padding-right: 4px; }
.tray button { width: 24px; }
.tray .weather { width: auto; gap: 9px; margin-right: 11px; font-size: 13px; }
.tray .kb { width: 34px; }
.tray .clock { flex-direction: column; width: 66px; line-height: 18px; }
.tray .note { width: 49px; padding-right: 8px; border-right: 1px solid #777; }
```
